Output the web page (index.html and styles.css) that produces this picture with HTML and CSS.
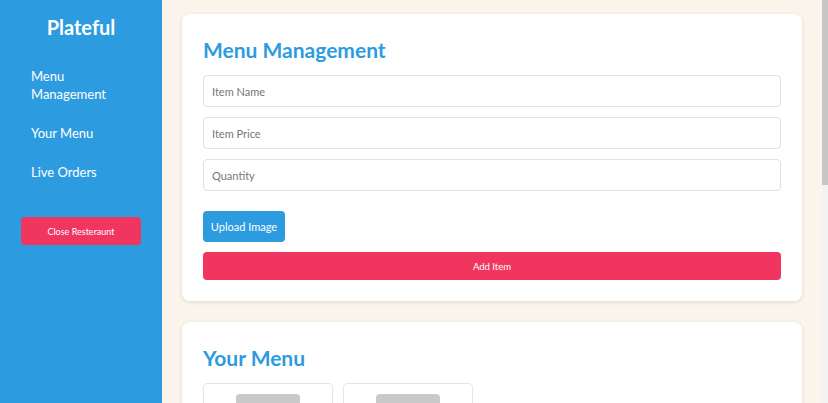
FILE: index.html
```html
<!DOCTYPE html>
<html lang="en">
<head>
<meta charset="utf-8">
<title>Plateful</title>
<link rel="stylesheet" href="styles.css">
</head>
<body>
<div class="app">
  <aside class="sidebar">
    <h1 class="brand">Plateful</h1>
    <nav class="nav">
      <a class="nav-link" href="#manage">Menu Management</a>
      <a class="nav-link" href="#menu">Your Menu</a>
      <a class="nav-link" href="#orders">Live Orders</a>
    </nav>
    <button class="btn btn-red btn-close">Close Resteraunt</button>
  </aside>
  <main class="main">
    <section class="card" id="manage">
      <h2 class="card-title">Menu Management</h2>
      <div class="form">
        <input class="field" type="text" placeholder="Item Name">
        <input class="field" type="text" placeholder="Item Price">
        <input class="field" type="text" placeholder="Quantity">
      </div>
      <button class="btn btn-blue btn-upload">Upload Image</button>
      <button class="btn btn-red btn-add">Add Item</button>
    </section>
    <section class="card" id="menu">
      <h2 class="card-title">Your Menu</h2>
      <div class="menu-grid">
        <div class="menu-item">
          <div class="thumb"></div>
        </div>
        <div class="menu-item">
          <div class="thumb"></div>
        </div>
      </div>
    </section>
  </main>
  <div class="scrollbar" aria-hidden="true"><div class="scroll-thumb"></div></div>
</div>
</body>
</html>
```
FILE: styles.css
```css
* { box-sizing: border-box; }
html, body { margin: 0; height: 100%; }
body {
  font-family: "Lato", "Open Sans", sans-serif;
  background: #fbf4ea;
  color: #333;
}
.app { display: flex; height: 100vh; position: relative; }
.sidebar {
  width: 162px;
  flex: 0 0 162px;
  background: #2d9be0;
  padding: 15px 21px 0;
  display: flex;
  flex-direction: column;
}
.brand {
  margin: 0;
  color: #fff;
  font-size: 20px;
  line-height: 24px;
  font-weight: 700;
  text-align: center;
}
.nav {
  display: flex;
  flex-direction: column;
  gap: 21px;
  margin-top: 28px;
}
.nav-link {
  color: #fff;
  text-decoration: none;
  font-size: 13px;
  line-height: 18px;
  padding: 0 10px;
}
.btn {
  border: none;
  border-radius: 4px;
  color: #fff;
  font-family: inherit;
  cursor: pointer;
  display: block;
}
.btn-red { background: #f0355f; }
.btn-blue { background: #2d9be0; }
.btn-close {
  margin-top: 36px;
  height: 28px;
  width: 120px;
  font-size: 9px;
}
.main {
  flex: 1;
  overflow: hidden;
  padding: 14px 26px 20px 20px;
  display: flex;
  flex-direction: column;
  gap: 21px;
}
.scrollbar {
  position: absolute;
  top: 0;
  right: 0;
  bottom: 0;
  width: 6px;
  background: #f3f3f3;
}
.scroll-thumb {
  height: 185px;
  background: #c6c6c6;
}
.card {
  background: #fff;
  border-radius: 8px;
  box-shadow: 0 1px 4px rgba(0,0,0,0.12);
  padding: 22px 21px 21px;
  flex-shrink: 0;
}
.card-title {
  margin: 0 0 11px;
  color: #2d9be0;
  font-size: 21px;
  line-height: 28px;
  font-weight: 700;
}
.form {
  display: flex;
  flex-direction: column;
  gap: 10px;
}
.field {
  height: 32px;
  width: 100%;
  border: 1px solid #e1e1e1;
  border-radius: 4px;
  padding: 0 8px;
  font-family: inherit;
  font-size: 11px;
  color: #333;
}
.field::placeholder { color: #777; }
.btn-upload {
  margin-top: 20px;
  height: 31px;
  width: 82px;
  font-size: 11px;
}
.btn-add {
  margin-top: 10px;
  height: 28px;
  width: 100%;
  font-size: 9.5px;
}
.menu-grid {
  display: flex;
  gap: 10px;
  margin-top: 10px;
}
.menu-item {
  width: 130px;
  height: 120px;
  border: 1px solid #e5e5e5;
  border-radius: 4px;
  padding: 10px;
  display: flex;
  flex-direction: column;
  align-items: center;
}
.thumb {
  width: 64px;
  height: 64px;
  background: #c9c9c9;
  border-radius: 4px;
}
```
